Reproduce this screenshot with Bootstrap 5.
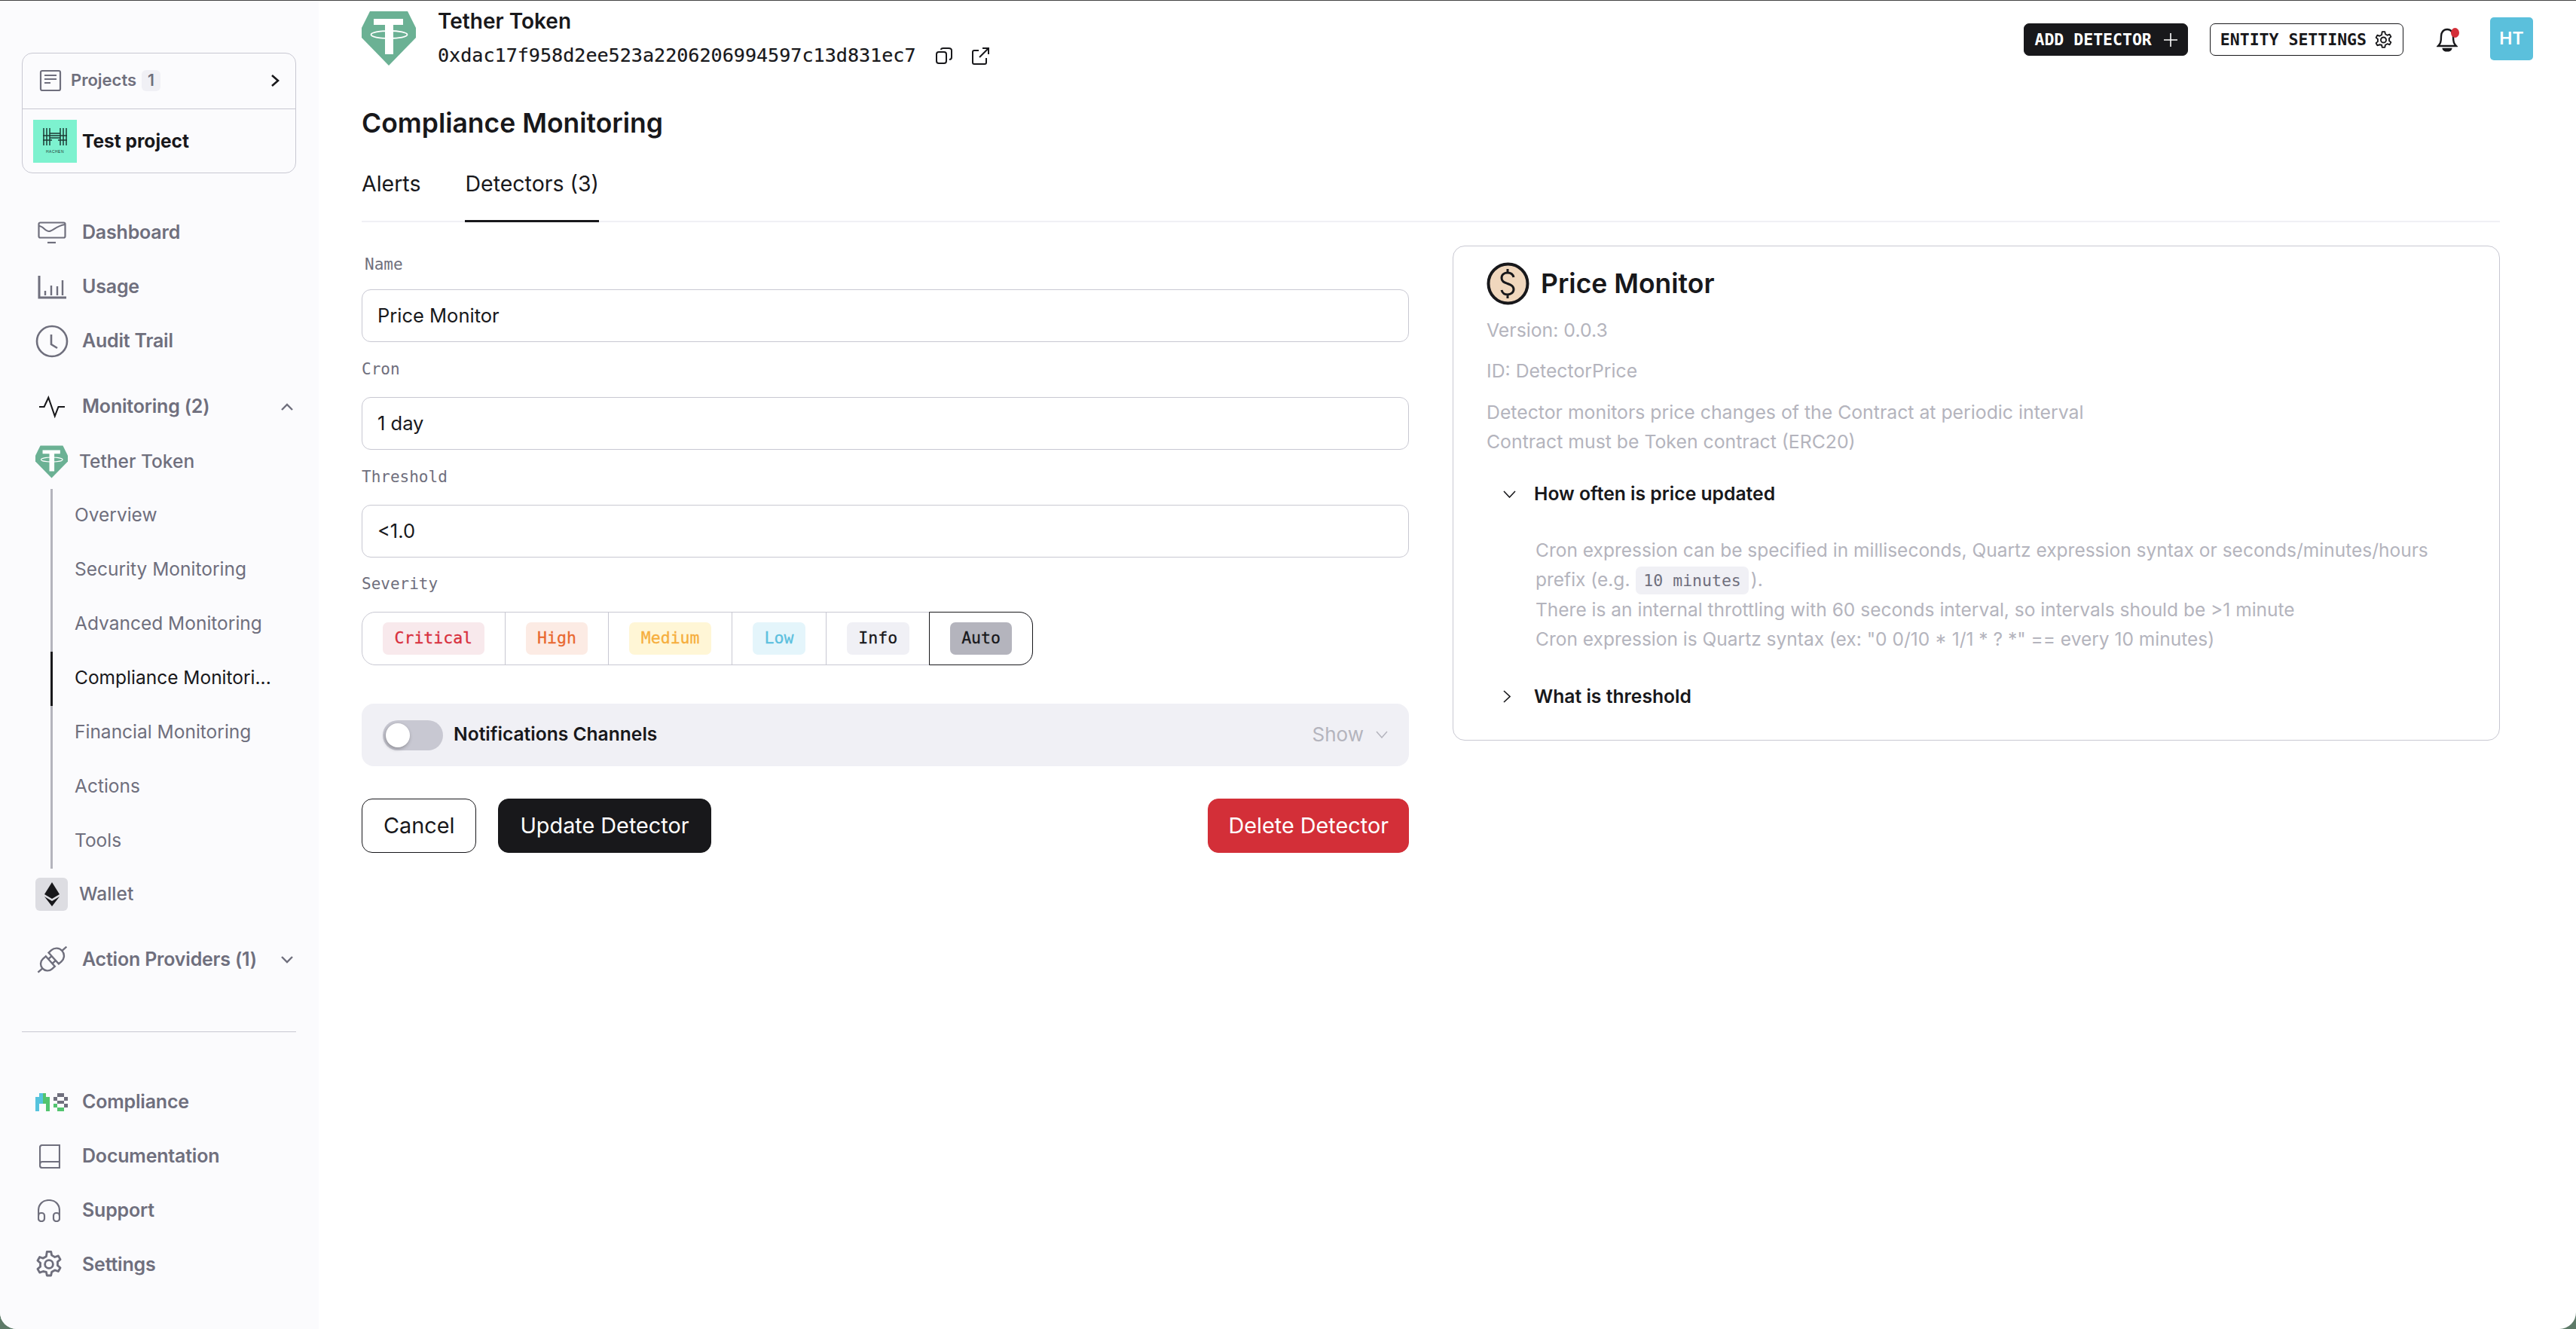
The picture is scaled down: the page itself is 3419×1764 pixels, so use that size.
<!DOCTYPE html>
<html lang="en">
<head>
  <meta charset="UTF-8" />
  <meta name="viewport" content="width=device-width, initial-scale=1.0"/>
  <title>Compliance Monitoring</title>
  <link href="https://cdn.jsdelivr.net/npm/bootstrap@5.3.0/dist/css/bootstrap.min.css" rel="stylesheet">
  <style>
    html, body { height: 100%; background: #5d7a68; }
    body { font-family: Inter, "Liberation Sans", sans-serif; color: #18181b; font-size: 26px; overflow: hidden; }
    svg { display: block; flex: none; }
    .app-frame { height: 100vh; background: #fff; border-top: 1px solid #444; border-radius: 0 0 22px 22px; overflow: hidden; }
    .mono { font-family: "DejaVu Sans Mono", "Liberation Mono", monospace; }

    .side-rail { width: 423px; flex: none; background: #fbfbfd; padding: 69px 30px 0 29px; }
    .project-box { border: 1px solid #c8c8d2; border-radius: 14px; height: 160px; }
    .project-head { height: 74px; border-bottom: 1px solid #c8c8d2; padding: 0 21px 2px 22px; color: #6f6f7d; font-size: 22px; font-weight: 600; }
    .count-chip { background: #f0f0f5; border-radius: 6px; padding: 0 8px; line-height: 28px; margin-left: 7px; font-size: 21px; }
    .project-tile { width: 58px; height: 57px; background: #7df2cf; margin-left: 14px; margin-right: 7px; }
    .project-name { font-weight: 700; font-size: 24.5px; }
    .rail-link { height: 72px; padding-left: 19px; padding-right: 4px; color: #6f6f7d; font-size: 25px; font-weight: 600; letter-spacing: -.2px; text-decoration: none; }
    .rail-link .ic-slot { width: 61px; flex: none; padding-left: 2px; }
    .rail-entity { color: #6f6f7d; font-size: 24.5px; font-weight: 500; padding-left: 18px; }
    .rail-entity .ent-ic { width: 43px; height: 44px; margin-right: 15px; }
    .sub-list { margin-left: 38px; border-left: 3px solid #b4b4bd; }
    .sub-link { height: 72px; padding: 0 0 3px 29px; margin-left: -3px; border-left: 3px solid transparent; color: #6f6f7d; font-size: 24.5px; text-decoration: none; white-space: nowrap; }
    .sub-link.on { color: #18181b; border-left-color: #18181b; }
    .eth-tile { background: #dddde2; border-radius: 6px; }
    .rail-rule { border-top: 1px solid #c8c8d2; margin: 59px 0 57px; }
    .gear-rail { color: #6f6f7d; margin: -2px 0 0 -4px; }

    .main-pane { padding: 14px 57px 0; min-width: 0; }
    .top-bar { height: 72px; }
    .ent-block { margin-left: 29px; }
    .ent-title { font-size: 28px; font-weight: 600; line-height: 26px; }
    .ent-addr { font-size: 25.1px; line-height: 30px; margin-top: 18px; -webkit-text-stroke: .2px; }
    .addr-ic { margin-left: 26px; }
    .tool-btn { height: 43px; border-radius: 7px; border: 1px solid #18181b; font-size: 21.5px; font-weight: 700; padding: 0 13px; line-height: 1; }
    .tool-btn.solid { background: #18181b; color: #fff; }
    .tool-btn.hollow { background: #fff; color: #18181b; margin-left: 29px; }
    .gear-top { margin-left: 10px; }
    .bell-wrap { margin: 4px 43px 0 44px; }
    .bell-dot { width: 11px; height: 13px; background: #d32f38; right: -2px; top: 2px; }
    .avatar-box { width: 57px; height: 57px; background: #5bc0dc; color: #fff; border-radius: 5px; font-weight: 600; font-size: 23px; margin-top: -8px; }
    .content-col { margin-right: 44px; }
    .page-head { font-size: 35.5px; font-weight: 600; line-height: 44px; margin: 55px 0 0; }
    .tab-strip { border-bottom: 2px solid #f0f0f5; margin-top: 34px; height: 75px; gap: 59px; }
    .tab-item { color: #18181b; font-size: 28.5px; text-decoration: none; height: 75px; line-height: 48px; }
    .tab-item.on { border-bottom: 3px solid #18181b; }
    .detail-row { --bs-gutter-x: 58px; margin-top: 31px; }

    .f-label { display: block; font-size: 21px; color: #6f6f7d; line-height: 28px; padding: 22px 0 23px; margin: 0; }
    .f-label.first { padding: 11px 0 19px 4px; }
    .f-label.sev { padding: 21px 0 23px; }
    .form-control.f-input { height: 70px; border-radius: 12px; border-color: #c8c8d2; font-size: 25.5px; padding: 0 20px 2px; color: #18181b; }
    .sev-group { border: 1px solid #c8c8d2; border-radius: 18px; height: 71px; }
    .sev-item { padding: 0 27px; border-left: 1px solid #c8c8d2; }
    .sev-item:first-child { border-left: 0; }
    .sev-item.picked { margin: -1px; border: 1px solid #18181b; border-radius: 0 18px 18px 0; }
    .sev-tag { font-size: 21.5px; height: 43px; padding: 0 15.5px; border-radius: 7px; -webkit-text-stroke: .3px; }
    .notify-panel { background: #f0f0f5; border-radius: 16px; height: 83px; padding: 0 28px 0 28px; margin-top: 51px; }
    .notify-switch { width: 80px; height: 40px; border-radius: 20px; background: #c8c8d2; position: relative; margin-right: 14px; }
    .notify-switch::after { content: ""; position: absolute; left: 4px; top: 4px; width: 32px; height: 32px; border-radius: 50%; background: #fff; box-shadow: -1px 2px 5px rgba(0,0,0,.3); }
    .notify-name { font-weight: 600; font-size: 24.6px; padding-bottom: 2px; }
    .notify-more { color: #b4b4bd; font-size: 26px; padding-bottom: 2px; }
    .act-row { margin-top: 43px; }
    .act-btn { height: 72px; border-radius: 14px; font-size: 28.8px; padding: 0 28px; line-height: 1; }
    .act-btn.hollow { border: 1px solid #18181b; background: #fff; color: #18181b; }
    .act-btn.solid { background: #18181b; color: #fff; border-color: #18181b; margin-left: 29px; }
    .act-btn.danger { background: #d32f38; color: #fff; border-color: #d32f38; padding: 0 26px; }

    .info-card { border: 1px solid #c8c8d2; border-radius: 16px; padding: 21px 44px 38px; }
    .info-title { font-size: 35.5px; font-weight: 600; line-height: 56px; margin: 0 0 0 15px; }
    .muted-line { color: #b4b4bd; font-size: 24.8px; line-height: 39px; margin: 0; }
    .faq-head { font-weight: 600; font-size: 24.7px; line-height: 39px; padding-left: 22px; }
    .faq-head svg { margin-right: 24px; }
    .faq-body { padding-left: 65px; margin: 36px 0 37px; font-size: 24.5px; }
    .code-pill { background: #f0f0f5; color: #6f6f7d; font-size: 21.5px; padding: 6px 10px; border-radius: 7px; margin: 0 3px 0 1px; }
  </style>
</head>
<body>
  <svg width="0" height="0" class="position-absolute">
    <symbol id="tether-mark" viewBox="0 0 72 72">
      <path d="M11 0h50l11 22v13L36 72 0 35V22z" fill="#6bb194"/>
      <path d="M16 10h39v8H42v39H31V18H16z" fill="#fff"/>
      <ellipse cx="36.500" cy="31" rx="24" ry="5" fill="none" stroke="#fff" stroke-width="1.800"/>
    </symbol>
    <symbol id="gear-mark" viewBox="0 0 24 24">
      <circle cx="12" cy="12" r="3.400" fill="none" stroke="currentColor" stroke-width="1.800"/>
      <path d="M10.300 1.500h3.400l.6 3 2.600 1.500 2.900-1 1.700 3-2.300 2c.1 1 .1 2 0 3l2.300 2-1.700 3-2.900-1-2.600 1.500-.6 3h-3.400l-.6-3L7.100 18l-2.900 1-1.700-3 2.300-2c-.1-1-.1-2 0-3l-2.300-2 1.700-3 2.900 1 2.600-1.500z" fill="none" stroke="currentColor" stroke-width="1.800" stroke-linejoin="round"/>
    </symbol>
  </svg>

  <div class="app-frame d-flex">
    <aside class="side-rail d-flex flex-column">
      <div class="project-box">
        <div class="project-head d-flex align-items-center">
          <svg width="30" height="30" viewBox="0 0 30 30" fill="none" stroke="#6f6f7d" stroke-width="2.2"><rect x="2" y="2" width="26" height="26" rx="2"/><path d="M7 8h16M7 13h16M7 18h8"/></svg>
          <span class="ms-2 ps-1">Projects</span><span class="count-chip">1</span>
          <svg class="ms-auto" width="12" height="18" viewBox="0 0 12 18" fill="none" stroke="#18181b" stroke-width="2.6"><path d="M2 2l8 7-8 7"/></svg>
        </div>
        <div class="d-flex align-items-center" style="height:84px">
          <div class="project-tile d-flex align-items-center justify-content-center">
            <svg width="34" height="36" viewBox="0 0 34 36" fill="none" stroke="#1d3a35" stroke-width="1.500"><path d="M2 1v23M6 1v23M10 1v23M24 1v23M28 1v23M32 1v23M10 8h14M1 11h32M10 14h14M1 17h12M21 17h12"/><text x="17" y="34" text-anchor="middle" font-family="Liberation Sans, sans-serif" font-size="5" letter-spacing=".5" fill="#1d3a35" stroke="none">HACHEN</text></svg>
          </div>
          <span class="project-name">Test project</span>
        </div>
      </div>

      <div style="margin-top:43px">
        <a class="rail-link d-flex align-items-center" href="#"><span class="ic-slot"><svg width="38" height="30" viewBox="0 0 38 30" fill="none" stroke="#6f6f7d" stroke-width="2.2"><rect x="1.500" y="1.500" width="35" height="20" rx="2"/><path d="M2 6c5 0 8 7 13 7s9-7 21-9"/><path d="M13 28h11"/></svg></span>Dashboard</a>
        <a class="rail-link d-flex align-items-center" href="#"><span class="ic-slot"><svg width="38" height="32" viewBox="0 0 38 32" fill="none" stroke="#6f6f7d" stroke-width="2.4"><path d="M2 1v29h36" stroke-width="3"/><path d="M10 27v-6M18 27V14M26 27V15M33 27V7"/></svg></span>Usage</a>
        <a class="rail-link d-flex align-items-center" href="#"><span class="ic-slot"><svg width="44" height="44" viewBox="0 0 44 44" fill="none" stroke="#6f6f7d" stroke-width="2.6" style="margin-left:-3px"><circle cx="22" cy="22" r="20"/><path d="M21 13v13l8 5"/></svg></span>Audit Trail</a>
      </div>

      <a class="rail-link d-flex align-items-center" href="#" style="margin-top:15px"><span class="ic-slot"><svg width="34" height="30" viewBox="0 0 36 30" fill="none" stroke="#18181b" stroke-width="2.2" style="margin-left:2px"><path d="M0 15h7l6-13 9 26 5-13h9"/></svg></span>Monitoring (2)<svg class="ms-auto" width="16" height="10" viewBox="0 0 16 10" fill="none" stroke="#6f6f7d" stroke-width="2.4"><path d="M1 9l7-7 7 7"/></svg></a>

      <div class="rail-entity d-flex align-items-center" style="height:73px">
        <svg class="ent-ic"><use href="#tether-mark"/></svg>
        Tether Token
      </div>
      <div class="sub-list">
        <a class="sub-link d-flex align-items-center" href="#">Overview</a>
        <a class="sub-link d-flex align-items-center" href="#">Security Monitoring</a>
        <a class="sub-link d-flex align-items-center" href="#">Advanced Monitoring</a>
        <a class="sub-link on d-flex align-items-center" href="#">Compliance Monitori...</a>
        <a class="sub-link d-flex align-items-center" href="#">Financial Monitoring</a>
        <a class="sub-link d-flex align-items-center" href="#">Actions</a>
        <a class="sub-link d-flex align-items-center" href="#">Tools</a>
      </div>
      <div class="rail-entity d-flex align-items-center" style="height:67px">
        <span class="ent-ic eth-tile d-flex align-items-center justify-content-center">
          <svg width="20" height="32" viewBox="0 0 20 32" fill="#18181b"><path d="M10 0l10 16-10 6L0 16z"/><path d="M10 25l10-6-10 13L0 19z"/></svg>
        </span>
        Wallet
      </div>
      <a class="rail-link d-flex align-items-center" href="#" style="margin-top:18px"><span class="ic-slot"><svg width="40" height="40" viewBox="-20 -20 40 40" fill="none" stroke="#6f6f7d" stroke-width="2.400" style="margin-left:-1px"><g transform="rotate(-42)"><path d="M-25 0h8M18 0h8M-3 -4h6M-3 4h6"/><path d="M-3 -9h-5a9 9 0 0 0 0 18h5z"/><path d="M3 -10v20h5a10 10 0 0 0 0-20z"/></g></svg></span>Action Providers (1)<svg class="ms-auto" width="16" height="10" viewBox="0 0 16 10" fill="none" stroke="#6f6f7d" stroke-width="2.4"><path d="M1 1l7 7 7-7"/></svg></a>

      <div class="rail-rule"></div>

      <a class="rail-link d-flex align-items-center" href="#"><span class="ic-slot"><svg width="43" height="24" viewBox="0 0 9 5" shape-rendering="crispEdges" style="margin-left:-3px"><path d="M1 0h1v1H1zM0 1h1v4H0zM1 1h1v2H1z" fill="#55c3dd"/><path d="M2 0h1v3H2zM3 1h1v4H3z" fill="#52c46f"/><path d="M6 0h2v1H6zM5 1h1v1H5zM8 1h1v1H8zM6 2h2v1H6zM8 3h1v1H8z" fill="#6f6f7d"/><path d="M5 3h1v1H5zM6 4h2v1H6z" fill="#52c46f"/></svg></span>Compliance</a>
      <a class="rail-link d-flex align-items-center" href="#"><span class="ic-slot"><svg width="28" height="32" viewBox="0 0 28 32" fill="none" stroke="#6f6f7d" stroke-width="2.2" style="margin-left:2px"><path d="M4 1h23v30H4c-2 0-3-1-3-3V4c0-2 1-3 3-3z"/><path d="M1 26c0-2 1-3 3-3h23"/></svg></span>Documentation</a>
      <a class="rail-link d-flex align-items-center" href="#"><span class="ic-slot"><svg width="30" height="30" viewBox="0 0 30 30" fill="none" stroke="#6f6f7d" stroke-width="2.2"><path d="M1 22V15C1 6 7 1 15 1s14 5 14 14v7"/><rect x="1" y="18" width="8" height="11" rx="3.500"/><rect x="21" y="18" width="8" height="11" rx="3.500"/></svg></span>Support</a>
      <a class="rail-link d-flex align-items-center" href="#"><span class="ic-slot"><svg class="gear-rail" width="38" height="38"><use href="#gear-mark"/></svg></span>Settings</a>
    </aside>

    <main class="main-pane flex-grow-1">
      <div class="top-bar d-flex align-items-start">
        <svg width="72" height="72"><use href="#tether-mark"/></svg>
        <div class="ent-block">
          <div class="ent-title">Tether Token</div>
          <div class="ent-addr mono d-flex align-items-center">0xdac17f958d2ee523a2206206994597c13d831ec7
            <svg class="addr-ic" width="22" height="22" viewBox="0 0 22 22" fill="none" stroke="#18181b" stroke-width="2"><rect x="1" y="6" width="13" height="15" rx="3"/><path d="M7 3c0-1 1-2 3-2h7c2 0 4 1 4 3v9c0 2-1 3-3 3"/></svg>
            <svg class="addr-ic" width="23" height="23" viewBox="0 0 23 23" fill="none" stroke="#18181b" stroke-width="2"><path d="M9 4H3c-1 0-2 1-2 2v14c0 1 1 2 2 2h14c1 0 2-1 2-2v-6M10 13L21 2M14 1h8v8"/></svg>
          </div>
        </div>
        <div class="ms-auto d-flex align-items-start pt-3">
          <button class="tool-btn solid btn mono d-flex align-items-center">ADD DETECTOR<svg class="ms-3" width="18" height="18" viewBox="0 0 18 18" stroke="#fff" stroke-width="1.600"><path d="M9 0v18M0 9h18"/></svg></button>
          <button class="tool-btn hollow btn mono d-flex align-items-center">ENTITY SETTINGS<svg class="gear-top" width="25" height="26"><use href="#gear-mark"/></svg></button>
          <span class="bell-wrap position-relative">
            <svg width="28" height="34" viewBox="0 0 28 34" fill="none" stroke="#18181b" stroke-width="2.400"><path d="M2 26c3-3 4-5 4-13 0-5 3-9 8-9s8 4 8 9c0 8 1 10 4 13z"/><path d="M9 30c1 3 9 3 10 0z" fill="#18181b"/></svg>
            <span class="bell-dot position-absolute rounded-circle"></span>
          </span>
          <div class="avatar-box d-flex align-items-center justify-content-center">HT</div>
        </div>
      </div>

      <div class="content-col">
        <h1 class="page-head">Compliance Monitoring</h1>
        <div class="tab-strip d-flex">
          <a class="tab-item" href="#">Alerts</a>
          <a class="tab-item on" href="#">Detectors (3)</a>
        </div>

        <div class="row detail-row">
          <div class="col-6">
            <label class="f-label first mono">Name</label>
            <input class="form-control f-input" value="Price Monitor">
            <label class="f-label mono">Cron</label>
            <input class="form-control f-input" value="1 day">
            <label class="f-label mono">Threshold</label>
            <input class="form-control f-input" value="&lt;1.0">
            <label class="f-label sev mono">Severity</label>
            <div class="sev-group d-inline-flex align-items-stretch mono">
              <div class="sev-item d-flex align-items-center"><span class="sev-tag d-flex align-items-center" style="background:#f8e9ec;color:#d8303e">Critical</span></div>
              <div class="sev-item d-flex align-items-center"><span class="sev-tag d-flex align-items-center" style="background:#fcebe4;color:#e9682f">High</span></div>
              <div class="sev-item d-flex align-items-center"><span class="sev-tag d-flex align-items-center" style="background:#fff6d6;color:#f6ae3c">Medium</span></div>
              <div class="sev-item d-flex align-items-center"><span class="sev-tag d-flex align-items-center" style="background:#e4f5fb;color:#5bc0de">Low</span></div>
              <div class="sev-item d-flex align-items-center"><span class="sev-tag d-flex align-items-center" style="background:#f0f0f5;color:#18181b">Info</span></div>
              <div class="sev-item picked d-flex align-items-center"><span class="sev-tag d-flex align-items-center" style="background:#b4b4bd;color:#18181b">Auto</span></div>
            </div>
            <div class="notify-panel d-flex align-items-center">
              <span class="notify-switch"></span>
              <span class="notify-name">Notifications Channels</span>
              <span class="notify-more ms-auto d-flex align-items-center">Show<svg class="ms-3" width="16" height="10" viewBox="0 0 16 10" fill="none" stroke="#b4b4bd" stroke-width="1.500"><path d="M1 1l7 8 7-8"/></svg></span>
            </div>
            <div class="act-row d-flex">
              <button class="act-btn hollow btn">Cancel</button>
              <button class="act-btn solid btn">Update Detector</button>
              <button class="act-btn danger btn ms-auto">Delete Detector</button>
            </div>
          </div>

          <div class="col-6">
            <div class="info-card card">
              <div class="d-flex align-items-center" style="margin-bottom:14px">
                <svg width="57" height="57" viewBox="0 0 57 57" fill="#f0d7bd" stroke="#18181b" stroke-width="4"><circle cx="28.500" cy="28.500" r="26"/><path d="M36 20c-1-4-4-6-8-6s-8 2-8 7 4 6 8 7.500 8 3 8 7.500-4 7-8 7-7-2-8-6M28 9v5M28 43v5" fill="none" stroke-width="3"/></svg>
                <h2 class="info-title">Price Monitor</h2>
              </div>
              <p class="muted-line" style="margin-bottom:15px">Version: 0.0.3</p>
              <p class="muted-line" style="margin-bottom:16px">ID: DetectorPrice</p>
              <p class="muted-line">Detector monitors price changes of the Contract at periodic interval<br>Contract must be Token contract (ERC20)</p>
              <div class="faq-head d-flex align-items-center" style="margin-top:30px"><svg width="17" height="10" viewBox="0 0 17 10" fill="none" stroke="#18181b" stroke-width="1.600"><path d="M1 1l7.500 8L16 1"/></svg>How often is price updated</div>
              <div class="faq-body muted-line">
                Cron expression can be specified in milliseconds, Quartz expression syntax or seconds/minutes/hours<br>
                prefix (e.g. <span class="code-pill mono">10 minutes</span>).<br>
                There is an internal throttling with 60 seconds interval, so intervals should be &gt;1 minute<br>
                Cron expression is Quartz syntax (ex: "0 0/10 * 1/1 * ? *" == every 10 minutes)
              </div>
              <div class="faq-head d-flex align-items-center"><svg width="10" height="17" viewBox="0 0 10 17" fill="none" stroke="#18181b" stroke-width="1.600" style="margin-right:31px"><path d="M1 1l8 7.500L1 16"/></svg>What is threshold</div>
            </div>
          </div>
        </div>
      </div>
    </main>
  </div>
  <script src="https://cdn.jsdelivr.net/npm/bootstrap@5.3.0/dist/js/bootstrap.bundle.min.js"></script>
</body>
</html>
